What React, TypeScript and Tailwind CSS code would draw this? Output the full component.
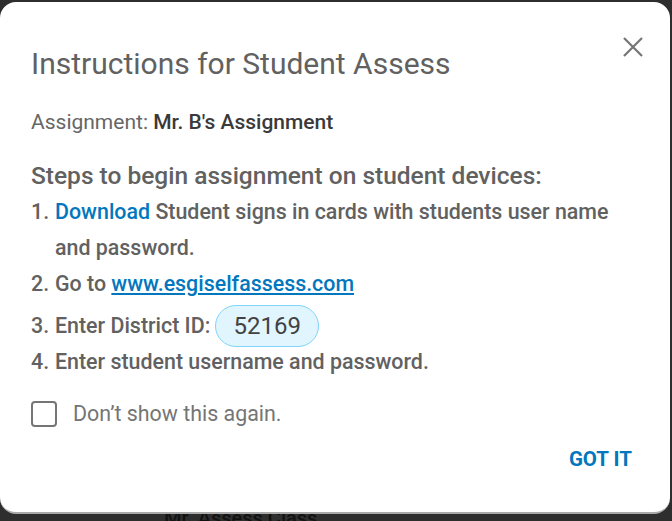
export default function App() {
  return (
    <div
      className="relative h-[521px] w-[672px] overflow-hidden bg-[#2e2e2e]"
      style={{ fontFamily: 'Roboto, "Liberation Sans", sans-serif' }}
    >
      {/* page behind the overlay */}
      <div className="absolute left-[164px] top-[503px] text-[20px] font-medium text-[#111]">Mr. Assess Class</div>

      <div className="absolute left-0 top-[2px] h-[512px] w-[670px] rounded-[16px] border-b-2 border-[#aaa] bg-white">
        <button className="absolute right-[25px] top-[33px] text-[#757575]">
          <svg width="24" height="24" viewBox="0 0 24 24" fill="none" stroke="currentColor" strokeWidth="2.2">
            <path d="M3 3l18 18M21 3L3 21" />
          </svg>
        </button>

        <div className="pl-[31px] pr-[38px] pt-[44px]">
          <h1 className="text-[30px] font-normal leading-[36px] text-[#616161]">Instructions for Student Assess</h1>

          <p className="mt-[28px] text-[21px] leading-[24px] text-[#666]">
            Assignment: <span className="font-medium text-[#3a3a3a]">Mr. B's Assignment</span>
          </p>

          <h2 className="mt-[27px] text-[24.5px] font-medium leading-[30px] text-[#616161]">
            Steps to begin assignment on student devices:
          </h2>

          <ol className="mt-[3px] pr-[10px] text-[21.4px] font-medium leading-[36px] text-[#616161]">
            <li className="flex">
              <span className="w-[24px] shrink-0">1.</span>
              <span>
                <a className="text-[#0277bd]">Download</a> Student signs in cards with students user name and password.
              </span>
            </li>
            <li className="flex">
              <span className="w-[24px] shrink-0">2.</span>
              <span>
                Go to <a className="text-[#0277bd] underline underline-offset-2">www.esgiselfassess.com</a>
              </span>
            </li>
            <li className="mt-[6px] flex h-[36px] items-center">
              <span className="w-[24px] shrink-0">3.</span>
              <span>Enter District ID:</span>
              <span className="ml-[5px] flex h-[42px] w-[104px] shrink-0 items-center justify-center rounded-full border border-[#81d4fa] bg-[#e1f5fe] text-[24px] font-normal text-[#424242]">
                52169
              </span>
            </li>
            <li className="flex">
              <span className="w-[24px] shrink-0">4.</span>
              <span>Enter student username and password.</span>
            </li>
          </ol>

          <label className="mt-[21px] flex items-center gap-[16px]">
            <span className="h-[26px] w-[26px] rounded-[4px] border-2 border-[#757575]" />
            <span className="text-[21.4px] leading-[24px] text-[#757575]">Don’t show this again.</span>
          </label>

          <div className="mt-[20px] flex justify-end">
            <button className="text-[20.5px] font-bold leading-[24px] text-[#0277bd]">GOT IT</button>
          </div>
        </div>
      </div>
    </div>
  );
}
